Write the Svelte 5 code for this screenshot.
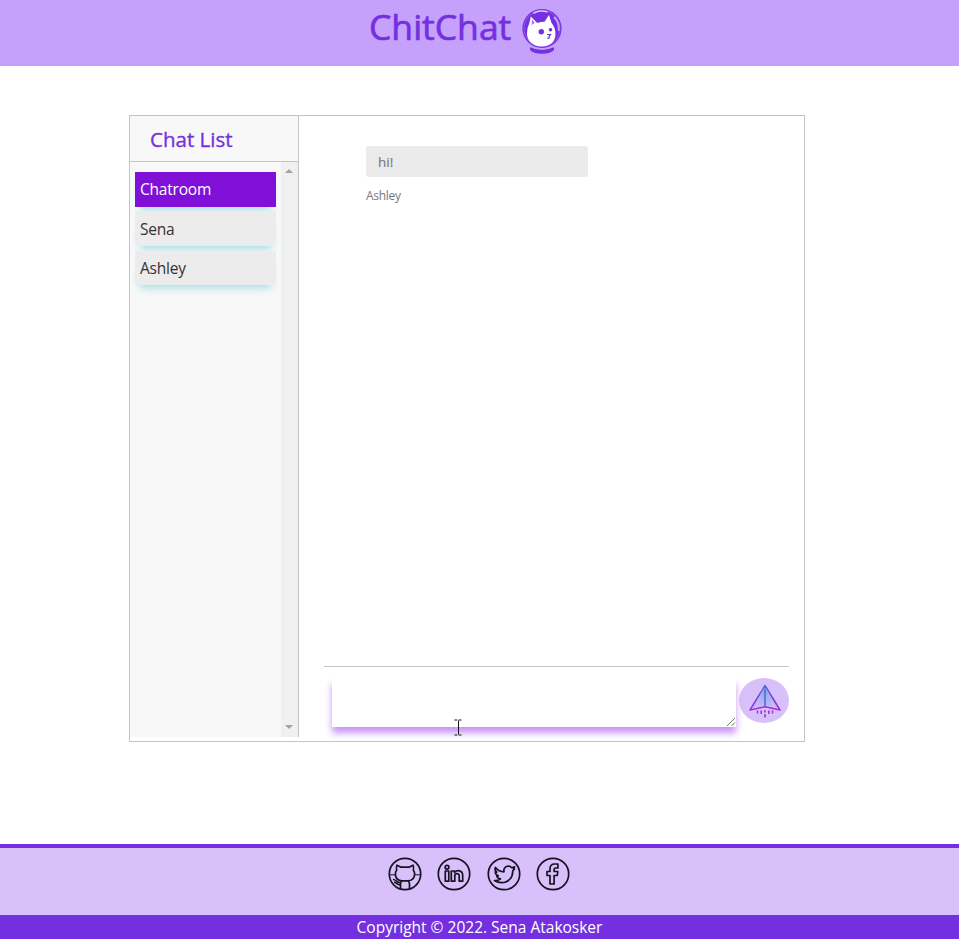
<script>
  const chats = ['Chatroom', 'Sena', 'Ashley'];
  let active = $state('Chatroom');
</script>

<div class="page">
  <header>
    <h1>ChitChat</h1>
    <svg class="logo" viewBox="0 0 40 46" aria-label="Cat astronaut">
      <ellipse cx="20" cy="20.500" rx="19.600" ry="19.500" fill="#7430e0" />
      <ellipse cx="20" cy="20.500" rx="18" ry="18" fill="none" stroke="#9e6cf0" stroke-width=".7" />
      <path d="M12 5C15 3.200 20 2.500 25 3.800" fill="none" stroke="#dcc5fb" stroke-width="1.500" stroke-linecap="round" />
      <path d="M32.500 9.500C35.500 12.500 37 17 36.800 22" fill="none" stroke="#c5a1fb" stroke-width="2" stroke-linecap="round" />
      <path d="M8.800 8.500L15.200 15Q19 13.800 22.500 13.800L27 7L29.500 15Q33.500 19.500 33.500 26C33.500 34.500 27 38.500 19.500 38.500C11 38.500 5 33 5 25.500Q5 19.500 7.200 15.500Z" fill="#fff" />
      <path d="M10 11.500L12.600 14.800L9.800 17Z" fill="#9c6df0" />
      <circle cx="19.300" cy="23.800" r="2.700" fill="#7430e0" />
      <circle cx="28.500" cy="21.800" r="1.800" fill="#7430e0" />
      <path d="M25 26.500h3.500l-1.300 1.500v1.900l-1.900.4" fill="none" stroke="#7430e0" stroke-width="1.200" />
      <path d="M8 39Q20 44.600 32 39V42Q29 45.700 20 45.700Q11 45.700 8 42Z" fill="#7430e0" />
      <path d="M8 38.700Q20 43.700 32 38.700" fill="none" stroke="#c5a1fb" stroke-width=".8" />
    </svg>
  </header>

  <main>
    <aside>
      <h2>Chat List</h2>
      <div class="list-area">
        <div class="list">
          {#each chats as chat}
            <button class:active={active === chat} onclick={() => (active = chat)}>{chat}</button>
          {/each}
        </div>
        <div class="track"><i class="up"></i><i class="down"></i></div>
      </div>
    </aside>
    <section>
      <div class="messages">
        <p class="bubble">hi!</p>
        <p class="sender">Ashley</p>
      </div>
      <div class="compose">
        <div class="input">
          <textarea aria-label="Message"></textarea>
          <svg class="grip" viewBox="0 0 10 10"><path d="M1 9L9 1M5.500 9L9 5.500" stroke="#777" stroke-width="1" /></svg>
          <svg class="caret" viewBox="0 0 8 17"><path d="M.5 1h2.800M4.700 1h2.800M4.500 1.500v14M.5 16h2.800M4.700 16h2.800" stroke="#111" stroke-width="1" /></svg>
        </div>
        <button class="send" aria-label="Send">
          <svg viewBox="0 0 34 34">
            <defs>
              <linearGradient id="plane" x1="0" y1="0" x2="0" y2="1">
                <stop offset="0" stop-color="#3f78d4" />
                <stop offset=".6" stop-color="#713fd6" />
                <stop offset="1" stop-color="#a32ddf" />
              </linearGradient>
              <linearGradient id="sail" x1="0" y1="0" x2="0" y2="1">
                <stop offset="0" stop-color="#62b6e6" />
                <stop offset="1" stop-color="#cfb5fa" />
              </linearGradient>
            </defs>
            <path d="M17 2L26 24L17 22L8 24Z" fill="url(#sail)" />
            <path d="M17 1.500L32 26L17 22.800L2 26Z" fill="none" stroke="url(#plane)" stroke-width="1.500" stroke-linejoin="round" />
            <path d="M16.300 2h1.400V22.500h-1.400Z" fill="#6252d2" />
            <path d="M17 4L5.500 24M17 4L28.500 24" stroke="#a78be8" stroke-width=".6" />
            <path d="M9.500 26.500v3M13.200 26.500v3.500M17 26v2.500M17 30v3.500M20.800 26.500v3.500M24.500 26.500v3" stroke="#a22bd6" stroke-width="1.500" />
          </svg>
        </button>
      </div>
    </section>
  </main>

  <footer>
    <nav>
      <svg viewBox="0 0 34 34" aria-label="GitHub">
        <circle cx="17" cy="17" r="15.700" />
        <path d="M9 8.200L13 10.200H21L25 8.200Q26 10.500 25.300 13Q27 15 26.600 18C26 22 23 23.600 20 23.900H14C11 23.600 8 22 7.400 18Q7 15 8.700 13Q8 10.500 9 8.200Z" />
        <path d="M20 23.900Q21.500 25 21.500 27V32M14 23.900Q12.500 25 12.500 27V32" />
        <path d="M1.500 17.800h6M26.500 17.800h6" stroke-width="1" />
        <path d="M5 22.500C8 22 8 26 12.500 25.800M6 25C8.500 25.500 9 28.200 12.500 28" stroke-width="1.500" />
      </svg>
      <svg viewBox="0 0 34 34" aria-label="LinkedIn">
        <circle cx="17" cy="17" r="15.700" />
        <circle cx="10" cy="10.300" r="1.900" />
        <path d="M8.300 14h3.500v10.200H8.300ZM14.300 14h3.200v1.300C20 12.800 25.700 13 25.700 18.500v5.700h-3.500v-5.400c0-3-4.400-2.900-4.400 0v5.400h-3.500Z" />
      </svg>
      <svg viewBox="0 0 34 34" aria-label="Twitter">
        <circle cx="17" cy="17" r="15.700" />
        <path d="M8.500 10.500C10.500 13 13.500 14.700 17 14.800C16.300 11.500 18.500 9.200 21.300 9.200C22.800 9.200 24 9.800 24.800 10.700L27.600 9.800L26.400 12L27.500 12L25.700 14C26 20.500 21.200 25.700 14.800 25.700C12 25.700 9.500 25 7.500 23.500C10 23.700 12 23 13.500 21.800C11.500 21.700 10.300 20.500 9.700 19L11.300 18.800C9.200 18 8.300 16.500 8.300 14.700L9.800 15.100C8 13.700 7.700 12 8.500 10.500Z" />
      </svg>
      <svg viewBox="0 0 34 34" aria-label="Facebook">
        <circle cx="17" cy="17" r="15.700" />
        <path d="M14 27V18.500h-3v-4h3V12C14 8.500 16 7 18.700 7h3.200v4h-2.200c-1 0-1.600.4-1.600 1.500v2h3.700l-.5 4h-3.200V27Z" />
      </svg>
    </nav>
    <p>Copyright © 2022. Sena Atakosker</p>
  </footer>
</div>

<style>
  :global(body) { margin: 0; background: #fff; }
  .page {
    box-sizing: border-box;
    height: 939px;
    display: flex;
    flex-direction: column;
    font-family: "Open Sans", "Noto Sans", sans-serif;
    overflow: hidden;
  }
  h1, h2, p { margin: 0; }
  button { border: 0; font-family: inherit; cursor: pointer; }
  header {
    box-sizing: border-box;
    height: 66px;
    flex: none;
    display: flex;
    padding-left: 369px;
    background: #c5a1fb;
  }
  h1 {
    width: 153px;
    font-size: 35.5px;
    line-height: 53px;
    font-weight: 400;
    -webkit-text-stroke: .7px #7430e0;
    color: #7430e0;
    white-space: nowrap;
  }
  .logo { width: 40px; height: 46px; margin-top: 8px; }
  main {
    box-sizing: border-box;
    width: 676px;
    height: 627px;
    flex: none;
    margin: 49px 0 0 129px;
    display: flex;
    border: 1px solid #c4c4c4;
  }
  aside {
    box-sizing: border-box;
    width: 169px;
    height: 621px;
    display: flex;
    flex-direction: column;
    background: #f8f8f8;
    border-right: 1px solid #c4c4c4;
  }
  h2 {
    box-sizing: border-box;
    height: 46px;
    padding-left: 20px;
    border-bottom: 1px solid #c4c4c4;
    font-size: 20.5px;
    line-height: 47px;
    font-weight: 400;
    -webkit-text-stroke: .35px #7430e0;
    color: #7430e0;
  }
  .list-area { flex: 1; display: flex; }
  .list {
    width: 141px;
    padding: 10px 5px 0;
    display: flex;
    flex-direction: column;
    gap: 4.7px;
  }
  .list button {
    height: 34.6px;
    flex: none;
    padding: 0 5px;
    text-align: left;
    font-size: 15.5px;
    letter-spacing: -.2px;
    color: #333;
    background: #ececec;
    box-shadow: 0 8px 8px -5px #a5dce6;
  }
  .list button.active { color: #fff; background: #8010d8; }
  .track {
    width: 17px;
    display: flex;
    flex-direction: column;
    justify-content: space-between;
    align-items: center;
    padding: 7px 1px 8px 0;
    box-sizing: border-box;
    background: #f0f0f0;
  }
  .track i { border: 4px solid transparent; }
  .track .up { border-top: 0; border-bottom-color: #a3a3a3; }
  .track .down { border-bottom: 0; border-top-color: #a3a3a3; }
  section {
    flex: 1;
    display: flex;
    flex-direction: column;
    padding: 0 15px 0 25px;
  }
  .messages {
    box-sizing: border-box;
    height: 551px;
    flex: none;
    padding: 30px 0 0 42px;
    border-bottom: 1px solid #c4c4c4;
  }
  .bubble {
    box-sizing: border-box;
    width: 222px;
    height: 31px;
    padding-left: 12px;
    border-radius: 3px;
    background: #ebebeb;
    color: #747b86;
    font-size: 13.5px;
    line-height: 32px;
    -webkit-text-stroke: .2px #747b86;
  }
  .sender { margin-top: 9px; color: #777; font-size: 12px; letter-spacing: -.3px; line-height: 19px; }
  .compose { display: flex; padding: 11px 0 0 8px; }
  .input { position: relative; width: 404px; height: 49px; }
  textarea {
    display: block;
    box-sizing: border-box;
    width: 100%;
    height: 100%;
    border: 0;
    resize: none;
    outline: none;
    background: #fff;
    box-shadow: 0 6px 7px #c794f5;
    clip-path: inset(0 -10px -14px -10px);
  }
  .grip { position: absolute; right: 0; bottom: 0; width: 10px; height: 10px; }
  .caret { position: absolute; left: 122px; top: 41px; width: 8px; height: 17px; }
  .send {
    width: 50px;
    height: 45px;
    margin-left: 3px;
    padding: 0;
    border-radius: 50%;
    background: #d8c0fb;
    display: flex;
    justify-content: center;
    align-items: center;
  }
  .send svg { width: 34px; height: 34px; margin: 0 0 0 1px; }
  footer {
    margin-top: auto;
    height: 95px;
    flex: none;
    box-sizing: border-box;
    display: flex;
    flex-direction: column;
    justify-content: space-between;
    border-top: 4px solid #7430e0;
    background: #d8c0fb;
  }
  nav { display: flex; justify-content: center; gap: 15.3px; padding: 9px 1px 0 0; }
  nav svg { width: 34px; height: 34px; fill: none; stroke: #171222; stroke-width: 1.700; stroke-linejoin: round; }
  footer p {
    height: 24px;
    line-height: 25px;
    text-align: center;
    font-size: 15.5px;
    color: #fff;
    background: #7430e0;
  }
</style>
